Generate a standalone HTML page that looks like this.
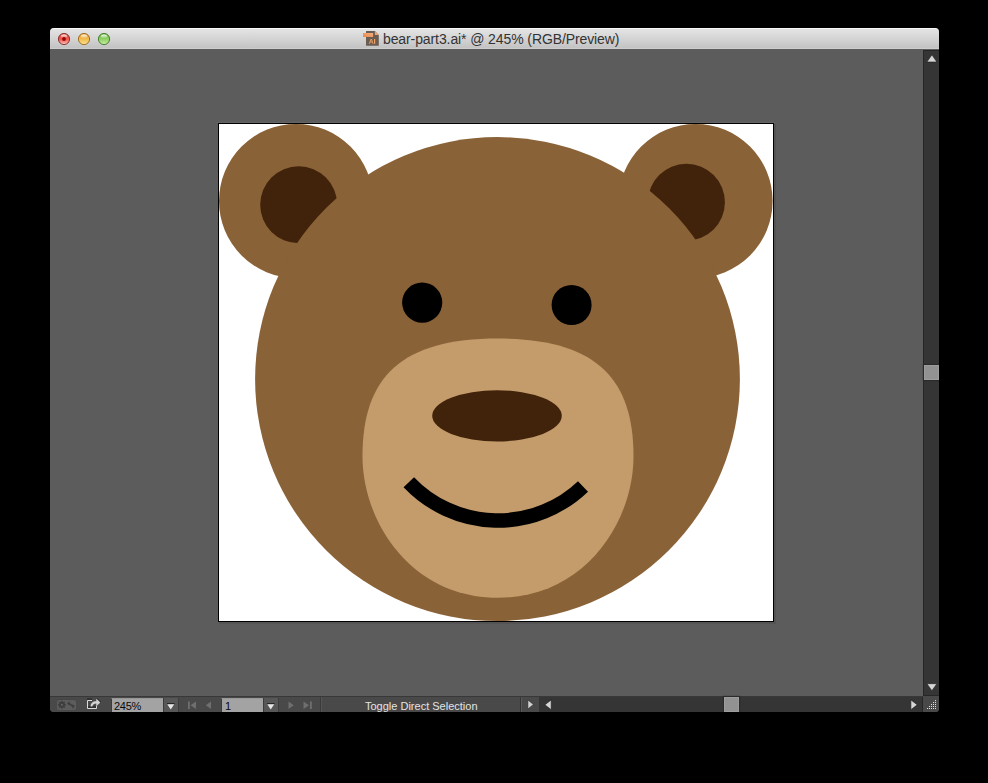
<!DOCTYPE html>
<html><head><meta charset="utf-8">
<style>
html,body{margin:0;padding:0;background:#000;width:988px;height:783px;overflow:hidden;position:relative;}
*{box-sizing:border-box;}
#win{position:absolute;left:50px;top:28px;width:889px;height:684px;border-radius:4px 4px 4px 4px;overflow:hidden;background:#5c5c5c;}
#title{position:absolute;left:0;top:0;width:889px;height:21px;background:linear-gradient(#f7f7f7 0,#f7f7f7 1px,#e4e4e4 1px,#d6d6d6 45%,#c3c3c3 20px,#cdcdcd 20px,#cdcdcd 21px);}
#title .t{position:absolute;left:333px;top:3px;font:14px "Liberation Sans",sans-serif;letter-spacing:-0.1px;color:#333;white-space:nowrap;}
.btn{position:absolute;top:5px;width:12px;height:12px;}
#canvas{position:absolute;left:0;top:21px;width:873px;height:647px;background:#5c5c5c;}
#vs{position:absolute;left:873px;top:22px;width:16px;height:646px;background:#353535;border-left:1px solid #262626;border-top:1px solid #262626;border-bottom:1px solid #262626;}
#bar{position:absolute;left:0;top:668px;width:889px;height:16px;background:#494949;border-top:1px solid #383838;}
.p{position:absolute;}
.lbl{font:11px "Liberation Sans",sans-serif;white-space:nowrap;position:absolute;}
</style></head>
<body>
<div id="win">
  <div id="title">
    <svg class="btn" style="left:8px" width="12" height="12" viewBox="0 0 12 12">
      <defs><linearGradient id="rg" x1="0" y1="0" x2="0" y2="1"><stop offset="0" stop-color="#e0564c"/><stop offset=".5" stop-color="#f4554a"/><stop offset="1" stop-color="#f8c6c0"/></linearGradient>
      <linearGradient id="rgh" x1="0" y1="0" x2="0" y2="1"><stop offset="0" stop-color="#fff" stop-opacity=".95"/><stop offset="1" stop-color="#fff" stop-opacity=".05"/></linearGradient></defs>
      <circle cx="6" cy="6" r="5.6" fill="url(#rg)" stroke="#7e2a25" stroke-width=".9"/>
      <ellipse cx="6" cy="3.3" rx="3.2" ry="1.9" fill="url(#rgh)"/>
      <circle cx="6" cy="6" r="1.9" fill="#8e0a06"/>
    </svg>
    <svg class="btn" style="left:28px" width="12" height="12" viewBox="0 0 12 12">
      <defs><linearGradient id="yg" x1="0" y1="0" x2="0" y2="1"><stop offset="0" stop-color="#e8a23c"/><stop offset=".5" stop-color="#f2b94a"/><stop offset="1" stop-color="#fbe49a"/></linearGradient>
      <linearGradient id="ygh" x1="0" y1="0" x2="0" y2="1"><stop offset="0" stop-color="#fff" stop-opacity=".95"/><stop offset="1" stop-color="#fff" stop-opacity=".05"/></linearGradient></defs>
      <circle cx="6" cy="6" r="5.6" fill="url(#yg)" stroke="#97661a" stroke-width=".9"/>
      <ellipse cx="6" cy="3.3" rx="3.2" ry="1.9" fill="url(#ygh)"/>
      
    </svg>
    <svg class="btn" style="left:48px" width="12" height="12" viewBox="0 0 12 12">
      <defs><linearGradient id="gg" x1="0" y1="0" x2="0" y2="1"><stop offset="0" stop-color="#72b84c"/><stop offset=".5" stop-color="#8ed062"/><stop offset="1" stop-color="#cdeeaa"/></linearGradient>
      <linearGradient id="ggh" x1="0" y1="0" x2="0" y2="1"><stop offset="0" stop-color="#fff" stop-opacity=".95"/><stop offset="1" stop-color="#fff" stop-opacity=".05"/></linearGradient></defs>
      <circle cx="6" cy="6" r="5.6" fill="url(#gg)" stroke="#3d7424" stroke-width=".9"/>
      <ellipse cx="6" cy="3.3" rx="3.2" ry="1.9" fill="url(#ggh)"/>
      
    </svg>
    <svg class="p" style="left:313px;top:3px" width="16" height="15" viewBox="0 0 16 15">
      <path d="M3 0 H11.9 L15.8 3.9 V14.7 H3 Z" fill="#6a5d53"/>
      <path d="M11.9 0.2 L15.8 4.1 H11.9 Z" fill="#f2a76e"/>
      <defs><linearGradient id="og" x1="0" y1="1" x2="1" y2="0"><stop offset="0" stop-color="#e8864a"/><stop offset="1" stop-color="#f6b184"/></linearGradient></defs>
      <rect x="0" y="2" width="10.1" height="4" fill="url(#og)"/>
      <path d="M5.8 12.8 L7.6 8 H8.8 L10.6 12.8 H9.6 L9.2 11.6 H7.2 L6.8 12.8Z M7.5 10.8 H8.9 L8.2 8.9Z" fill="#f0a062" fill-rule="evenodd"/>
      <rect x="11" y="8" width="1.2" height="4.8" fill="#f0a062"/>
    </svg>
    <div class="t">bear-part3.ai* @ 245% (RGB/Preview)</div>
  </div>
  <div id="canvas">
    <svg width="873" height="647" style="position:absolute;left:0;top:0" viewBox="50 49 873 647">
      <rect x="219" y="124" width="557" height="500" fill="#545454"/>
      <rect x="217" y="122" width="558" height="1" fill="#656565"/>
      <rect x="218.5" y="123.5" width="555" height="498" fill="#fff" stroke="#000" stroke-width="1"/>
      <path fill="#8A6237" d="M219.00 201.00a77 77 0 1 0 154 0a77 77 0 1 0 -154 0ZM618.60 201.00a77 77 0 1 0 154 0a77 77 0 1 0 -154 0Z"/>
      <circle cx="298.7" cy="204.7" r="38.5" fill="#41220B"/>
      <circle cx="686.4" cy="202.2" r="38.5" fill="#41220B"/>
      <ellipse cx="497.5" cy="379.1" rx="242.4" ry="242" fill="#8A6237"/>
      <circle cx="422.2" cy="302.6" r="20.1" fill="#000"/>
      <circle cx="571.6" cy="305" r="20" fill="#000"/>
      <path d="M498 338.5 C594.3 338.5 633.5 376.7 633.5 456.2 C633.5 521.2 585.6 597.8 498 597.8 C410.4 597.8 362.5 521.2 362.5 456.2 C362.5 376.7 401.7 338.5 498 338.5Z" fill="#C49C6B"/>
      <ellipse cx="497" cy="415.8" rx="64.8" ry="25.6" fill="#41220B"/>
      <path d="M408.8 482.2 A123 123 0 0 0 583 486.4" fill="none" stroke="#000" stroke-width="14.5"/>
    </svg>
  </div>
  <div id="vs">
    <svg class="p" style="left:2px;top:3px" width="12" height="9" viewBox="0 0 12 9"><path d="M0.9 8 L5.9 0.8 L10.9 8Z" fill="#d6d6d6" stroke="#1c1c1c" stroke-width=".6"/></svg>
    <div class="p" style="left:0;top:314px;width:15px;height:15px;background:#929292;border:1px solid #9d9d9d;box-shadow:0 0 1px 1px #2a2a2a;"></div>
    <svg class="p" style="left:2px;top:631px" width="12" height="9" viewBox="0 0 12 9"><path d="M0.9 1.7 L5.9 8.7 L10.9 1.7Z" fill="#d6d6d6" stroke="#1c1c1c" stroke-width=".6"/></svg>
  </div>
  <div id="bar">
    <!-- gear/sync -->
    <div class="p" style="left:7px;top:3px;width:19px;height:10px;background:#5c5c5c;border-radius:2px;box-shadow:0 -1px 0 #444;"></div>
    <svg class="p" style="left:7px;top:3px" width="19" height="10" viewBox="0 0 19 10">
      <g fill="#3e3e3e"><circle cx="4.9" cy="4.8" r="2.8"/><rect x="4.1" y="0.9" width="1.6" height="7.8"/><rect x="1" y="4" width="7.8" height="1.6"/><rect x="4.1" y="0.9" width="1.6" height="7.8" transform="rotate(45 4.9 4.8)"/><rect x="4.1" y="0.9" width="1.6" height="7.8" transform="rotate(-45 4.9 4.8)"/></g>
      <circle cx="4.9" cy="4.8" r="1" fill="#666"/>
      <path d="M10 3.4 L12.6 1.1 V5.7Z M17.9 6.35 L15.5 4 V8.9Z" fill="#3e3e3e"/>
      <path d="M12 3.4 L16 6.4" stroke="#3e3e3e" stroke-width="1.6"/>
    </svg>
    <!-- share -->
    <svg class="p" style="left:36px;top:1px" width="16" height="13" viewBox="0 0 16 13">
      <path d="M1 2 H6 M10.5 8 V10 H1" stroke="#1a1a1a" stroke-width="1" fill="none" transform="translate(0,-1)"/>
      <path d="M1.5 10.5 V2.5 H6 M1.5 10.5 H10.5 V7.6" fill="none" stroke="#d9d9d9" stroke-width="1"/>
      <path d="M10.3 0 L14.9 4.4" stroke="#151515" stroke-width="1"/>
      <path d="M4.6 8.6 C4.6 5.2 6.5 3.3 10.3 3.3 L10.3 0.4 L14.3 4.4 L10.3 8.2 L10.3 5.5 C8.2 5.5 6.8 6.3 6.4 8.6 Z" fill="#d2d2d2"/>
    </svg>
    <!-- zoom field -->
    <div class="p" style="left:61px;top:1px;width:52px;height:15px;background:#a3a3a3;border-left:1px solid #3c3c3c;border-top:1px solid #989898;"></div>
    <div class="lbl" style="left:64px;top:3px;color:#0a0a0a;letter-spacing:-0.3px;">245%</div>
    <div class="p" style="left:113px;top:1px;width:16px;height:15px;background:#575757;border-left:1px solid #3c3c3c;border-right:1px solid #3c3c3c;"></div>
    <svg class="p" style="left:117px;top:6px" width="8" height="7" viewBox="0 0 8 7"><rect x="0" y="0" width="7.6" height="1" fill="#262626"/><path d="M0.3 1.3 H7.2 L3.75 6.6Z" fill="#e6e6e6"/></svg>
    <!-- nav prev -->
    <svg class="p" style="left:137px;top:4px" width="26" height="9" viewBox="0 0 26 9"><g fill="#6f6f6f"><rect x="1" y="0.5" width="1.8" height="7.5"/><path d="M9 0.5 V8 L3.5 4.25Z"/><path d="M24 0.5 V8 L18.8 4.25Z"/></g></svg>
    <!-- page field -->
    <div class="p" style="left:171px;top:1px;width:42px;height:15px;background:#a3a3a3;border-left:1px solid #3c3c3c;border-top:1px solid #989898;"></div>
    <div class="lbl" style="left:175px;top:3px;color:#0a0a0a;">1</div>
    <div class="p" style="left:213px;top:1px;width:16px;height:15px;background:#575757;border-left:1px solid #3c3c3c;border-right:1px solid #3c3c3c;"></div>
    <svg class="p" style="left:217px;top:6px" width="8" height="7" viewBox="0 0 8 7"><rect x="0" y="0" width="7.6" height="1" fill="#262626"/><path d="M0.3 1.3 H7.2 L3.75 6.6Z" fill="#e6e6e6"/></svg>
    <!-- nav next -->
    <svg class="p" style="left:237px;top:4px" width="26" height="9" viewBox="0 0 26 9"><g fill="#6f6f6f"><path d="M1.5 0.5 V8 L6.7 4.25Z"/><path d="M16.5 0.5 V8 L22 4.25Z"/><rect x="23" y="0.5" width="1.8" height="7.5"/></g></svg>
    <div class="p" style="left:270px;top:0;width:1px;height:16px;background:#3a3a3a;"></div><div class="p" style="left:271px;top:0;width:1px;height:16px;background:#555;"></div>
    <div class="lbl" style="left:315px;top:3px;color:#e4e4e4;">Toggle Direct Selection</div>
    <div class="p" style="left:470px;top:0;width:1px;height:16px;background:#333;"></div>
    <div class="p" style="left:471px;top:0;width:1px;height:16px;background:#5a5a5a;"></div>
    <svg class="p" style="left:477px;top:2px" width="8" height="11" viewBox="0 0 8 11"><path d="M0.9 1 V10 L6.4 5.5Z" fill="#d2d2d2" stroke="#1c1c1c" stroke-width=".5"/></svg>
    <!-- h scroll -->
    <div class="p" style="left:489px;top:0;width:384px;height:16px;background:#353535;"></div>
    <svg class="p" style="left:494px;top:2px" width="9" height="12" viewBox="0 0 9 12"><path d="M7.2 0.9 V10.7 L0.9 5.8Z" fill="#d6d6d6" stroke="#1c1c1c" stroke-width=".6"/></svg>
    <div class="p" style="left:674px;top:0px;width:15px;height:15px;background:#929292;border:1px solid #9d9d9d;box-shadow:0 0 1px 1px #2a2a2a;"></div>
    <svg class="p" style="left:860px;top:2px" width="9" height="12" viewBox="0 0 9 12"><path d="M0.9 0.9 V10.7 L7.2 5.8Z" fill="#d6d6d6" stroke="#1c1c1c" stroke-width=".6"/></svg>
    <div class="p" style="left:872px;top:0;width:1px;height:16px;background:#262626;"></div>
    <!-- corner -->
    <div class="p" style="left:873px;top:-1px;width:16px;height:17px;background:#494949;"></div>
    <svg class="p" style="left:873px;top:-1px" width="16" height="16" viewBox="0 0 16 16"><g fill="#e0e0e0">
      <rect x="12" y="4" width="1" height="1"/>
      <rect x="10" y="6" width="1" height="1"/><rect x="12" y="6" width="1" height="1"/>
      <rect x="8" y="8" width="1" height="1"/><rect x="10" y="8" width="1" height="1"/><rect x="12" y="8" width="1" height="1"/>
      <rect x="6" y="10" width="1" height="1"/><rect x="8" y="10" width="1" height="1"/><rect x="10" y="10" width="1" height="1"/><rect x="12" y="10" width="1" height="1"/>
      <rect x="4" y="12" width="1" height="1"/><rect x="6" y="12" width="1" height="1"/><rect x="8" y="12" width="1" height="1"/><rect x="10" y="12" width="1" height="1"/><rect x="12" y="12" width="1" height="1"/>
    </g></svg>
  </div>
</div>
</body></html>
